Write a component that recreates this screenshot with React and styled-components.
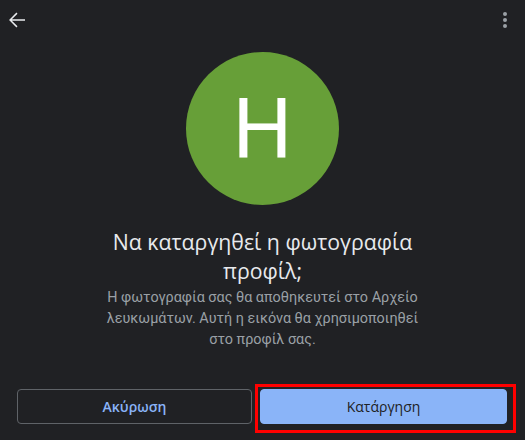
import React from "react";
import styled, { createGlobalStyle } from "styled-components";

const GlobalStyle = createGlobalStyle`
  html, body {
    margin: 0;
    padding: 0;
    background: #202124;
  }
  body {
    font-family: Roboto, "Noto Sans", sans-serif;
  }
`;

const Screen = styled.div`
  width: 525px;
  height: 440px;
  background: #202124;
  display: flex;
  flex-direction: column;
  box-sizing: border-box;
  overflow: hidden;
`;

const TopBar = styled.div`
  display: flex;
  justify-content: space-between;
  align-items: center;
  padding: 8px 8px 0 5px;
  height: 24px;
`;

const IconButton = styled.button`
  width: 24px;
  height: 24px;
  padding: 0;
  border: none;
  background: none;
  display: flex;
  cursor: pointer;
  color: ${(p) => p.color};
`;

const Body = styled.div`
  display: flex;
  flex-direction: column;
  align-items: center;
  padding-top: 20px;
`;

const Avatar = styled.div`
  width: 153px;
  height: 153px;
  border-radius: 50%;
  background: #679f38;
  color: #fff;
  display: flex;
  align-items: center;
  justify-content: center;
  font-family: Roboto, sans-serif;
  font-size: 84px;
  line-height: 1;
`;

const Title = styled.h1`
  margin: 22px 0 0;
  width: 340px;
  text-align: center;
  color: #e8eaed;
  font-family: "Open Sans", sans-serif;
  font-weight: 400;
  font-size: 21.3px;
  line-height: 29px;
`;

const Message = styled.p`
  margin: 2px 0 0;
  width: 320px;
  text-align: center;
  color: #9aa0a6;
  font-size: 14.4px;
  line-height: 21px;
`;

const Actions = styled.div`
  margin-top: auto;
  display: grid;
  grid-template-columns: 235px 247px;
  gap: 8px;
  padding: 0 18px 16px 17px;
`;

const Button = styled.button`
  position: relative;
  height: 35px;
  border-radius: 4px;
  box-sizing: border-box;
  font-family: "Open Sans", sans-serif;
  font-size: 14px;
  font-weight: ${(p) => (p.primary ? 400 : 600)};
  border: 1px solid ${(p) => (p.primary ? "#8ab4f8" : "#5f6368")};
  background: ${(p) => (p.primary ? "#8ab4f8" : "transparent")};
  color: ${(p) => (p.primary ? "#202124" : "#8ab4f8")};
  cursor: pointer;
`;

const Highlight = styled.span`
  position: absolute;
  top: -6px;
  left: -6px;
  right: -10px;
  bottom: -10px;
  border: 3px solid #ff0000;
  pointer-events: none;
`;

export default function App() {
  return (
    <Screen>
      <GlobalStyle />
      <TopBar>
        <IconButton color="#e8eaed" aria-label="Back">
          <svg width="24" height="24" viewBox="0 0 24 24" fill="currentColor">
            <path d="M20 11.25H6.9l5.6-5.6L11.45 4.6 4.05 12l7.4 7.4 1.05-1.05-5.6-5.6H20z" />
          </svg>
        </IconButton>
        <IconButton color="#9aa0a6" aria-label="More">
          <svg width="24" height="24" viewBox="0 0 24 24" fill="currentColor">
            <circle cx="12" cy="6" r="2" />
            <circle cx="12" cy="12" r="2" />
            <circle cx="12" cy="18" r="2" />
          </svg>
        </IconButton>
      </TopBar>
      <Body>
        <Avatar>H</Avatar>
        <Title>Να καταργηθεί η φωτογραφία προφίλ;</Title>
        <Message>
          Η φωτογραφία σας θα αποθηκευτεί στο Αρχείο λευκωμάτων. Αυτή η εικόνα
          θα χρησιμοποιηθεί στο προφίλ σας.
        </Message>
      </Body>
      <Actions>
        <Button>Ακύρωση</Button>
        <Button primary>
          Κατάργηση
          <Highlight />
        </Button>
      </Actions>
    </Screen>
  );
}
